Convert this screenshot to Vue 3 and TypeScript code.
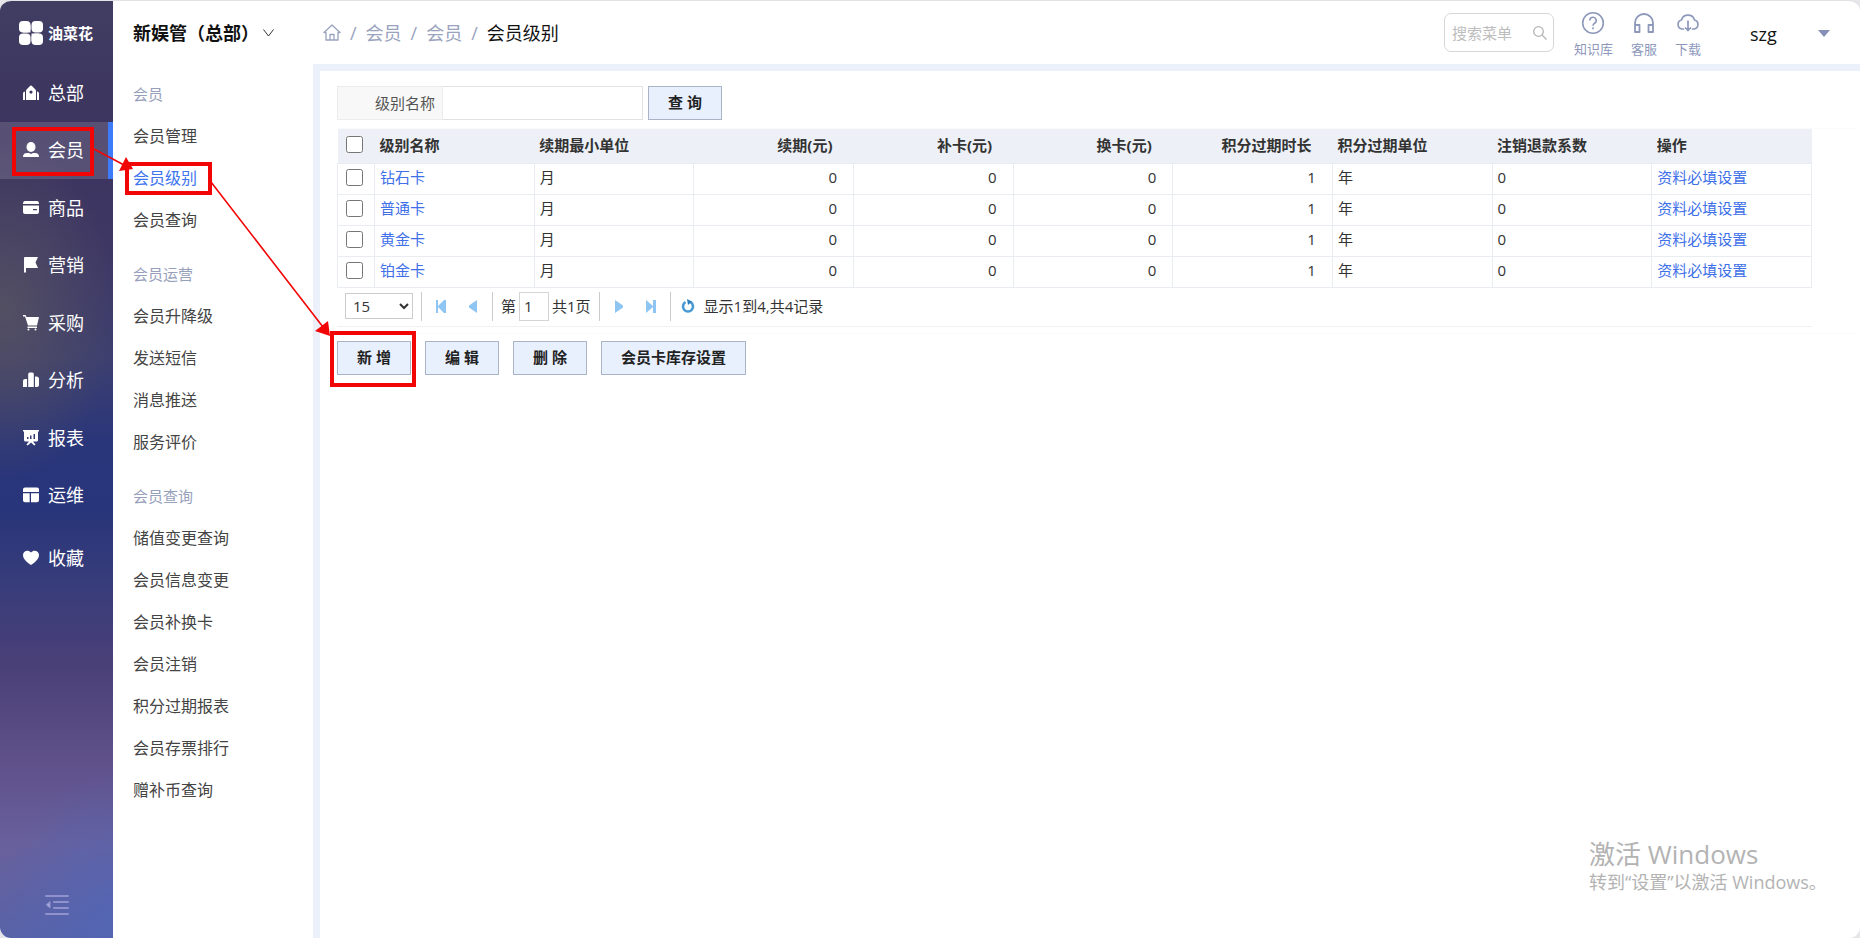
<script setup lang="ts">
import { ref } from 'vue'

interface NavItem { key: string; label: string }
interface MenuGroup { title: string; items: string[] }
interface Level { name: string; unit: string; renew: number; reissue: number; swap: number; span: number; spanUnit: string; refund: number }

const navItems: NavItem[] = [
  { key: 'home', label: '总部' },
  { key: 'member', label: '会员' },
  { key: 'goods', label: '商品' },
  { key: 'market', label: '营销' },
  { key: 'purchase', label: '采购' },
  { key: 'analysis', label: '分析' },
  { key: 'report', label: '报表' },
  { key: 'ops', label: '运维' },
  { key: 'favorite', label: '收藏' },
]
const activeNav = ref('member')

const groups: MenuGroup[] = [
  { title: '会员', items: ['会员管理', '会员级别', '会员查询'] },
  { title: '会员运营', items: ['会员升降级', '发送短信', '消息推送', '服务评价'] },
  { title: '会员查询', items: ['储值变更查询', '会员信息变更', '会员补换卡', '会员注销', '积分过期报表', '会员存票排行', '赠补币查询'] },
]
const activeMenu = ref('会员级别')

const levels: Level[] = ['钻石卡', '普通卡', '黄金卡', '铂金卡'].map((name) => ({
  name, unit: '月', renew: 0, reissue: 0, swap: 0, span: 1, spanUnit: '年', refund: 0,
}))
const levelName = ref('')
const keyword = ref('')
const page = ref('1')
const pageSize = ref('15')
</script>

<template>
  <div class="app">
    <aside class="sidebar">
      <div class="logo">
        <svg width="24" height="24" viewBox="0 0 24 24" fill="#fff" aria-hidden="true">
          <rect x="0" y="0" width="11.500" height="11.500" rx="4" />
          <rect x="12.500" y="0" width="11.500" height="11.500" rx="4" />
          <rect x="0" y="12.500" width="11.500" height="11.500" rx="4" />
          <rect x="12.500" y="12.500" width="11.500" height="11.500" rx="4" />
          <path d="M8 4h3.500v7.500H4V8zM12.500 12.500H20V16l-4 4h-3.500z" />
        </svg>
        <span>油菜花</span>
      </div>
      <nav class="nav">
        <a v-for="item in navItems" :key="item.key" href="#" :class="['nav-item', item.key, { active: item.key === activeNav }]" @click.prevent="activeNav = item.key">
          <svg width="16" height="16" viewBox="0 0 16 16" fill="currentColor" aria-hidden="true">
            <path v-if="item.key === 'home'" fill-rule="evenodd" d="M3 15V6q0-1 1-2l2.500-2.500Q8-.5 9.500 1.500L12 4q1 1 1 2v9zM0 15V8.500Q0 6.500 2 6.500V15zM14 15V6.500q2 0 2 2V15zM8 5.500a1.600 1.600 0 1 0 0 3.200 1.600 1.600 0 0 0 0-3.200z" />
            <template v-else-if="item.key === 'member'"><ellipse cx="8" cy="5" rx="4.500" ry="5" /><path d="M0 15q0-4 4-4h2l2 1 2-1h2q4 0 4 4z" /></template>
            <path v-else-if="item.key === 'goods'" fill-rule="evenodd" d="M2 1h12q2 0 2 3H0q0-3 2-3zM0 5.500h16V12q0 2-2 2H2q-2 0-2-2zM10 9v1.300h4V9z" />
            <path v-else-if="item.key === 'market'" d="M1 1q0-1 1-1h13l-2.500 5.500L15 11H3v4.500H1z" />
            <template v-else-if="item.key === 'purchase'"><path d="M0 0h2.500l1 2H16l-2 8.500H5L2 1.500H0zM4.500 11.500H14V13H4.500z" /><circle cx="5.500" cy="14.500" r="1" /><circle cx="12.500" cy="14.500" r="1" /></template>
            <path v-else-if="item.key === 'analysis'" d="M0 15V9q0-2 2-2h2v8zM5.200 15V2q0-1.500 1.500-1.500h2.600q1.500 0 1.500 1.500v13zM12 15V4.500h1.500Q16 4.500 16 7v6q0 2-2 2z" />
            <path v-else-if="item.key === 'report'" fill-rule="evenodd" d="M0 0h16v1.500h-1V10q0 1.500-1.500 1.500H10l2.500 3-1.200 1L8 12.500l-3.300 3-1.200-1 2.500-3H2.500Q1 11.500 1 10V1.500H0zM4 7v2h1.500V7zM7 5.500V9h1.500V5.500zM10.500 4v5H12V4z" />
            <path v-else-if="item.key === 'ops'" d="M2 .5h12q2 0 2 2V5H0V2.500q0-2 2-2zM0 6.300h6.700v9H2q-2 0-2-2zM8 6.300h8v7q0 2-2 2H8z" />
            <path v-else d="M8 15C4 12.500 0 9 0 5 0 1 5-1 8 2.500 11-1 16 1 16 5c0 4-4 7.500-8 10z" />
          </svg>
          <span>{{ item.label }}</span>
        </a>
      </nav>
      <button class="collapse" type="button" aria-label="收起">
        <svg width="24" height="20" viewBox="0 0 24 20" fill="none" stroke="#8f92cc" stroke-width="2" stroke-linecap="round" aria-hidden="true">
          <path d="M1 1h22M9 7h14M9 13h14M1 19h22" /><path d="M5 7v6L1.500 10z" fill="#a9abe0" stroke-width="1" />
        </svg>
      </button>
    </aside>

    <section class="submenu">
      <button class="org" type="button">
        <span>新娱管（总部）</span>
        <svg width="11" height="8" viewBox="0 0 11 8" fill="none" stroke="#333" aria-hidden="true"><path d="M.5.5l5 6.500 5-6.500" /></svg>
      </button>
      <nav class="groups">
        <div v-for="group in groups" :key="group.title" class="group">
          <h2>{{ group.title }}</h2>
          <ul>
            <li v-for="item in group.items" :key="item">
              <a href="#" :class="{ active: item === activeMenu }" @click.prevent="activeMenu = item">{{ item }}</a>
            </li>
          </ul>
        </div>
      </nav>
    </section>

    <div class="main">
      <header class="topbar">
        <nav class="crumbs">
          <a href="#" class="home-link" aria-label="首页">
            <svg width="18" height="17" viewBox="0 0 18 17" fill="none" stroke="#9aa3bd" stroke-width="1.300" stroke-linejoin="round" aria-hidden="true"><path d="M1 8.500L9 1l8 7.500h-2V16H3V8.500zM7 16v-5.500h4V16" /></svg>
          </a>
          <i>/</i><a href="#">会员</a><i>/</i><a href="#">会员</a><i>/</i><span>会员级别</span>
        </nav>
        <div class="tools">
          <label class="menu-search">
            <input v-model="keyword" type="text" placeholder="搜索菜单" aria-label="搜索菜单" />
            <svg width="14" height="14" viewBox="0 0 14 14" fill="none" stroke="#b5b5b5" stroke-width="1.300" aria-hidden="true"><circle cx="5.500" cy="5.500" r="4.800" /><path d="M9 9l4.500 4.500" /></svg>
          </label>
          <div class="shortcuts">
            <a href="#">
              <svg width="24" height="24" viewBox="0 0 24 24" fill="none" stroke="#8d98bb" stroke-width="1.600" aria-hidden="true"><circle cx="12" cy="12" r="10.300" /><path d="M8.800 9.500a3.200 3.200 0 1 1 4.800 2.700c-1.200.7-1.600 1.200-1.600 2.600M12 16.200v2" /></svg>
              <span>知识库</span>
            </a>
            <a href="#">
              <svg width="24" height="24" viewBox="0 0 24 24" fill="none" stroke="#8d98bb" stroke-width="1.800" stroke-linejoin="round" aria-hidden="true"><path d="M3 21v-9a9 9 0 0 1 18 0v9M3 14h4.500v7H3zM16.500 14H21v7h-4.500z" /></svg>
              <span>客服</span>
            </a>
            <a href="#">
              <svg width="24" height="24" viewBox="0 0 24 24" fill="none" stroke="#8d98bb" stroke-width="1.700" stroke-linecap="round" stroke-linejoin="round" aria-hidden="true"><path d="M7.500 18H6A4.600 4.600 0 0 1 5.500 9a6.800 6.800 0 0 1 13 0A4.600 4.600 0 0 1 18 18h-1.500M12 10v9.500M9.500 17l2.500 2.500 2.500-2.500" /></svg>
              <span>下载</span>
            </a>
          </div>
          <button class="user" type="button">
            <span>szg</span>
            <svg width="12" height="8" viewBox="0 0 12 8" fill="#8690b5" aria-hidden="true"><path d="M0 0h12L6 7z" /></svg>
          </button>
        </div>
      </header>

      <main class="content">
        <form class="search-form" @submit.prevent>
          <label for="level-name">级别名称</label>
          <input id="level-name" v-model="levelName" type="text" />
          <button class="btn" type="submit">查 询</button>
        </form>

        <div class="grid-wrap">
          <table>
            <thead>
              <tr>
                <th class="check"><input type="checkbox" aria-label="全选" /></th>
                <th>级别名称</th>
                <th>续期最小单位</th>
                <th class="num">续期(元)</th>
                <th class="num">补卡(元)</th>
                <th class="num">换卡(元)</th>
                <th class="num">积分过期时长</th>
                <th>积分过期单位</th>
                <th>注销退款系数</th>
                <th>操作</th>
              </tr>
            </thead>
            <tbody>
              <tr v-for="row in levels" :key="row.name">
                <td class="check"><input type="checkbox" :aria-label="row.name" /></td>
                <td><a href="#">{{ row.name }}</a></td>
                <td>{{ row.unit }}</td>
                <td class="num">{{ row.renew }}</td>
                <td class="num">{{ row.reissue }}</td>
                <td class="num">{{ row.swap }}</td>
                <td class="num">{{ row.span }}</td>
                <td>{{ row.spanUnit }}</td>
                <td>{{ row.refund }}</td>
                <td><a href="#">资料必填设置</a></td>
              </tr>
            </tbody>
          </table>
          <div class="pager">
            <select v-model="pageSize" aria-label="每页条数">
              <option>15</option>
              <option>30</option>
              <option>50</option>
            </select>
            <div class="turn">
              <button type="button" aria-label="第一页"><svg width="12" height="13" viewBox="0 0 12 13" fill="#8ec5f2" aria-hidden="true"><path d="M1 0h2v6l6-6h2v13H9L3 7v6H1z" /></svg></button>
              <button type="button" aria-label="上一页"><svg width="12" height="13" viewBox="0 0 12 13" fill="#8ec5f2" aria-hidden="true"><path d="M10 0v13L2 7.500v-2z" /></svg></button>
            </div>
            <label class="page-no">第<input v-model="page" type="text" />共1页</label>
            <div class="turn">
              <button type="button" aria-label="下一页"><svg width="12" height="13" viewBox="0 0 12 13" fill="#8ec5f2" aria-hidden="true"><path d="M2 0v13l8-5.500v-2z" /></svg></button>
              <button type="button" aria-label="最后一页"><svg width="12" height="13" viewBox="0 0 12 13" fill="#8ec5f2" aria-hidden="true"><path d="M1 0l7 6V0h3v13H8V7l-7 6z" /></svg></button>
            </div>
            <div class="summary">
              <button type="button" aria-label="刷新"><svg width="14" height="14" viewBox="0 0 14 14" aria-hidden="true"><path d="M4.500 3.200A5 5 0 1 0 9.500 3.200" fill="none" stroke="#4a9bd4" stroke-width="2.600" /><path d="M6 0l5 2.500L7 6z" fill="#2f7fbe" /></svg></button>
              <span>显示1到4,共4记录</span>
            </div>
          </div>
        </div>

        <div class="actions">
          <button class="btn" type="button">新 增</button>
          <button class="btn" type="button">编 辑</button>
          <button class="btn" type="button">删 除</button>
          <button class="btn" type="button">会员卡库存设置</button>
        </div>
      </main>
    </div>

    <div class="watermark">
      <strong>激活 Windows</strong>
      <span>转到“设置”以激活 Windows。</span>
    </div>

    <svg class="marks" width="430" height="400" viewBox="0 0 430 400" fill="none" stroke="#f20505" aria-hidden="true">
      <g stroke-width="4">
        <rect x="14" y="129" width="78" height="45" />
        <rect x="127" y="164" width="83" height="29" />
        <rect x="332" y="333" width="82" height="52" />
      </g>
      <path d="M94 149L124 165M211 182L323 327" stroke-width="1.600" />
      <path d="M126 157L119 171L133 169zM328 321L315 331L330 336z" fill="#f20505" stroke="none" />
    </svg>
  </div>
</template>

<style>
body { margin: 0; background: #e6e6ea; }
</style>

<style scoped>
.app, .app * { box-sizing: border-box; }
.app {
  position: relative;
  display: flex;
  min-height: 100vh;
  overflow: hidden;
  border-top: 1px solid #e2e2e6;
  border-radius: 11px;
  background: #fff;
  color: #333;
  font: 15px/20px "Open Sans", "Noto Sans CJK SC", sans-serif;
}
a { color: inherit; text-decoration: none; }
button { margin: 0; padding: 0; border: 0; background: none; color: inherit; font: inherit; cursor: pointer; }
input, select { margin: 0; font: inherit; color: inherit; }
svg { display: block; flex: none; }

.sidebar {
  display: flex;
  flex: none;
  flex-direction: column;
  width: 113px;
  color: #fff;
  background:
    radial-gradient(ellipse 110px 150px at 100% 98%, rgba(80, 102, 184, .7), transparent),
    radial-gradient(ellipse 110px 170px at 5% 33%, rgba(84, 80, 98, .95), transparent),
    linear-gradient(180deg, #403d62 0, #3c345e 14%, #3e3764 26%, #3d3f6f 38%, #2a367a 47%, #28357a 54%, #373c7a 62%, #4a4078 71%, #5f508a 81%, #68609c 90%, #5863a8 100%);
}
.logo { display: flex; align-items: center; gap: 5px; height: 63px; padding-left: 19px; font-size: 15px; font-weight: 700; }
.nav { display: grid; grid-template-rows: repeat(8, 1fr) 68px; min-height: 528px; }
.nav-item { display: flex; align-items: center; gap: 9px; padding-left: 23px; font-size: 18px; }
.nav-item.active { border-right: 5px solid #3c7bfa; background: rgba(255, 255, 255, .14); }
.collapse { display: flex; justify-content: center; margin-top: auto; padding-bottom: 23px; }

.submenu { flex: none; width: 200px; padding-left: 20px; }
.org { display: flex; align-items: center; gap: 4px; height: 63px; color: #111; font-size: 18px; font-weight: 700; }
.groups { padding-top: 9px; }
.group { margin-bottom: 12px; }
.group h2 { margin: 0; color: #96a0ba; font-size: 15px; font-weight: 400; line-height: 42px; }
.group ul { margin: 0; padding: 0; list-style: none; }
.group a { display: block; color: #444; font-size: 16px; line-height: 42px; }
.group a.active { color: #3f75ee; }

.main { display: flex; flex: 1; flex-direction: column; min-width: 0; }
.topbar { display: flex; align-items: center; justify-content: space-between; height: 63px; padding: 0 30px 0 10px; }
.crumbs { display: flex; align-items: center; gap: 9px; color: #9aa3bd; font-size: 18px; }
.crumbs i { font-style: normal; }
.crumbs span { color: #111; }
.tools { display: flex; align-items: center; gap: 20px; }
.menu-search { display: flex; align-items: center; width: 110px; height: 39px; padding: 0 6px 0 7px; border: 1px solid #d5d5da; border-radius: 7px; }
.menu-search input { flex: 1; width: 0; padding: 0; border: 0; outline: 0; background: none; }
.menu-search input::placeholder { color: #bdbdbd; opacity: 1; }
.shortcuts { display: flex; gap: 18px; padding-top: 5px; color: #8d98bb; font-size: 13px; }
.shortcuts a { display: flex; flex-direction: column; align-items: center; gap: 4px; }
.user { display: flex; align-items: center; justify-content: space-between; width: 80px; margin-left: 29px; padding-top: 2px; color: #111; font-size: 18px; }

.content { flex: 1; padding: 15px 0 0 17px; border-top: 7px solid #ecf0fa; border-left: 7px solid #ecf0fa; }
.search-form { display: flex; align-items: flex-start; height: 34px; margin-bottom: 8px; }
.search-form label { width: 106px; padding: 6px 7px; border: 1px solid #ececec; background: #f8f8f8; color: #555; text-align: right; }
.search-form input { width: 200px; height: 34px; padding: 0 6px; border: 1px solid #e2e2e2; border-left: 0; outline: 0; }
.search-form .btn { margin-left: 5px; }
.btn { min-width: 74px; height: 34px; padding: 0 19px 2px; border: 1px solid #a9b4c6; background: #e8f0fe; color: #222; font-weight: 700; }

.grid-wrap { margin-right: 3px; padding: 0 45px 6px 0; border-top: 1px solid #fafafa; border-bottom: 1px solid #fafafa; }
table { width: 100%; border-collapse: collapse; table-layout: fixed; }
th { height: 34px; padding: 0 5px 2px; background: #edf0f6; text-align: left; }
td { height: 31px; padding: 0 5px 3px; border: 1px solid #e9edf2; }
td a { color: #4070e8; }
th.check, td.check { width: 37px; padding: 0 0 2px 8px; }
th.num { padding-right: 21px; text-align: right; }
td.num { padding-right: 16px; text-align: right; }
.check input { display: block; width: 17px; height: 17px; }

.pager { display: flex; align-items: center; height: 39px; padding: 0 0 1px 8px; border-bottom: 1px solid #f1f1f1; }
.pager > * + * { display: flex; align-items: center; height: 29px; border-left: 1px solid #ccc; }
.pager select { width: 68px; height: 26px; margin-right: 8px; padding-left: 3px; border: 1px solid #ccc; background: #fff; }
.turn { gap: 20px; padding: 0 13px; }
.page-no { gap: 3px; padding: 0 8px; }
.page-no input { width: 30px; height: 29px; padding: 0 4px; border: 1px solid #d5d5d5; outline: 0; }
.summary { gap: 9px; padding-left: 10px; }
.actions { display: flex; gap: 14px; padding-top: 7px; }

.watermark { position: absolute; right: 32px; bottom: 43px; display: flex; flex-direction: column; width: 239px; color: #b3b3b3; font-size: 18px; line-height: 26px; white-space: nowrap; }
.watermark strong { font-size: 26px; font-weight: 400; line-height: 30px; }
.marks { position: absolute; top: -1px; left: 0; pointer-events: none; }
</style>
